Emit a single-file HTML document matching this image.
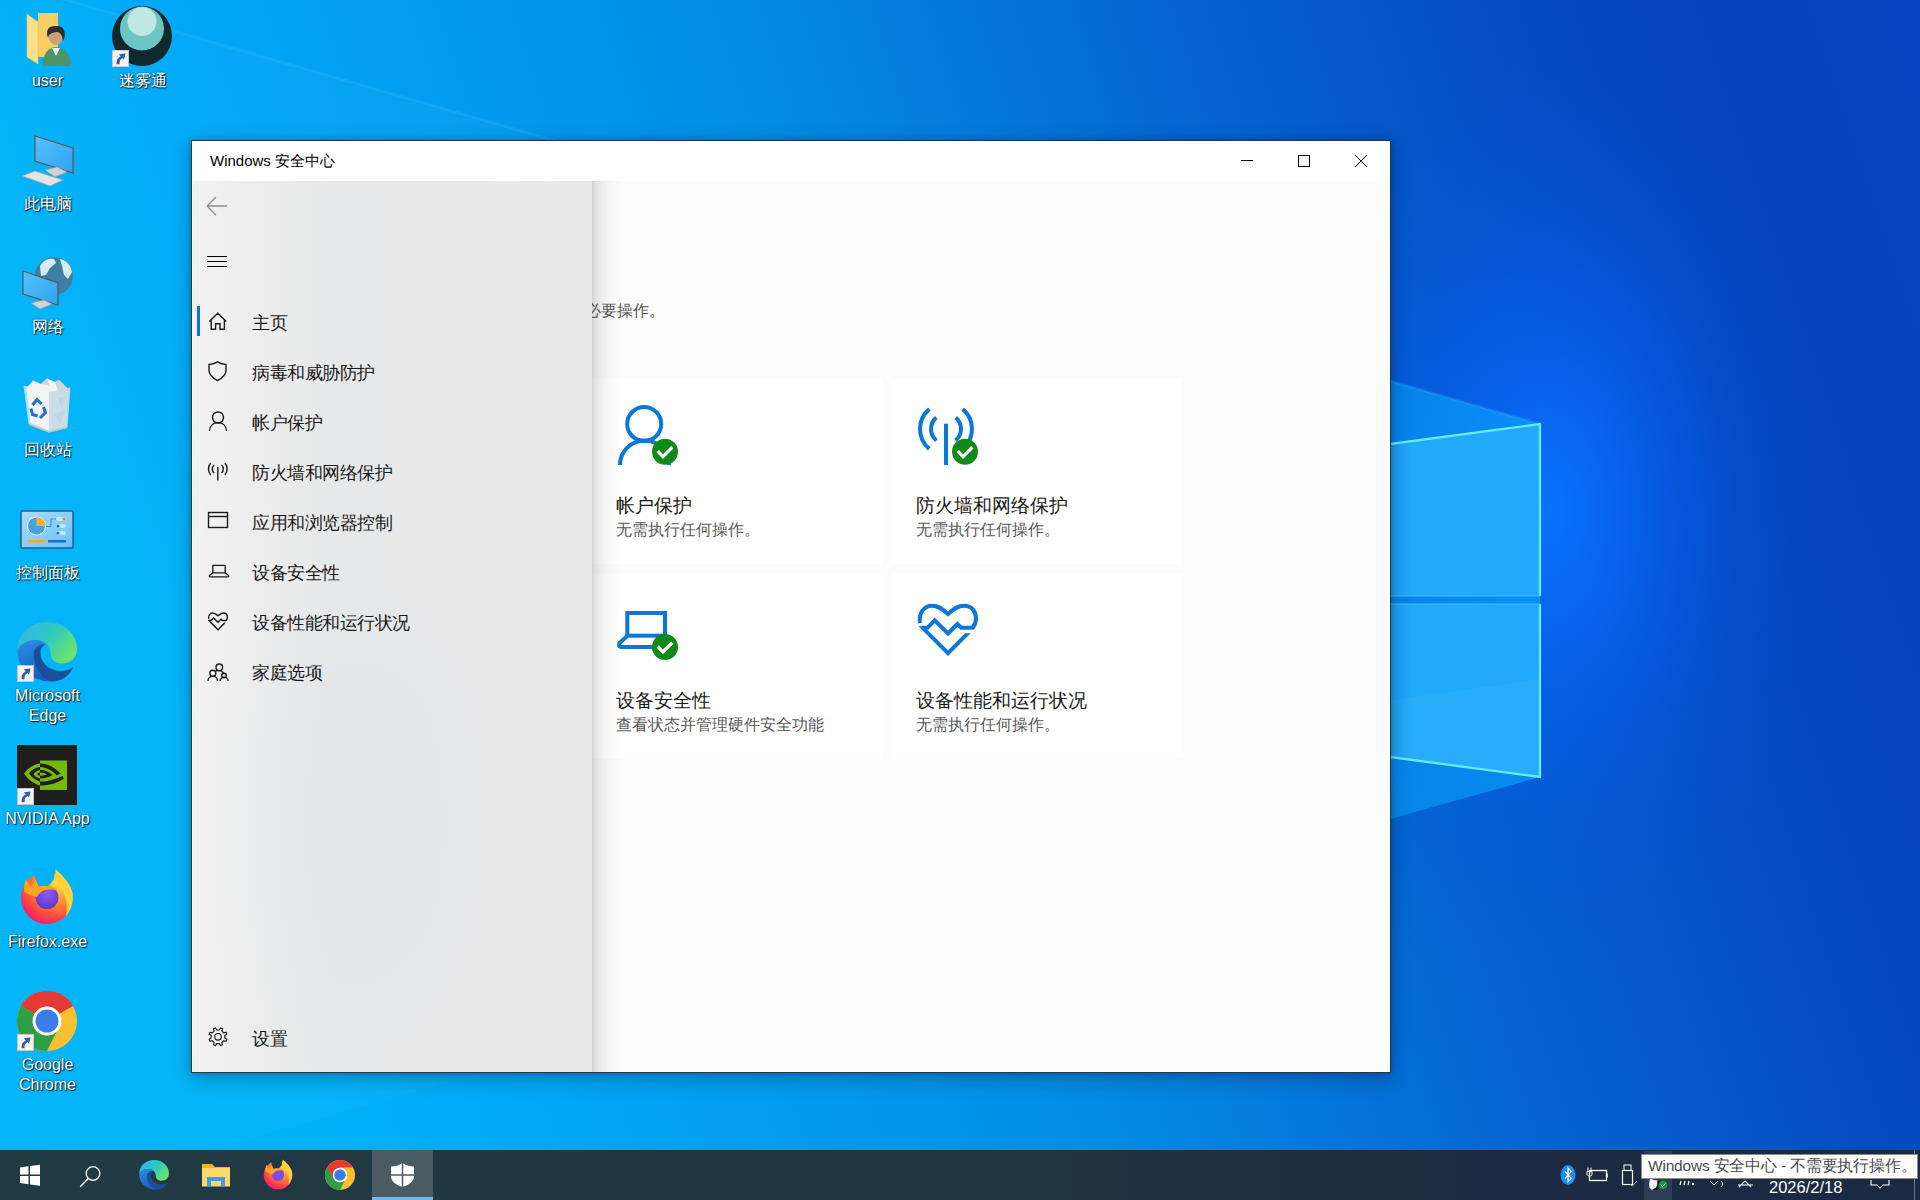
<!DOCTYPE html>
<html><head><meta charset="utf-8">
<style>
@font-face{font-family:"Liberation Sans CJK";src:local("Liberation Sans");unicode-range:U+3000-303F,U+3400-9FFF,U+FF00-FFEF;size-adjust:133.3%;ascent-override:67.9%;descent-override:15.9%;line-gap-override:0%;}
*{box-sizing:border-box;margin:0;padding:0}
html,body{width:1920px;height:1200px;overflow:hidden}
body{position:relative;font-family:"Liberation Sans CJK","Liberation Sans",sans-serif;
background:linear-gradient(72deg,#00b4fa 0%,#00b3f9 15%,#00a9f7 23%,#02a0f2 31%,#0296ec 40%,#028be4 49%,#047ade 57%,#046ad4 64%,#055acc 73%,#054cc4 81%,#0544bd 88%,#0643c0 100%);}
.abs{position:absolute}
#wall{position:absolute;left:0;top:0;width:1920px;height:1150px;overflow:hidden}
/* desktop icons */
.di{position:absolute;width:95px;text-align:center;color:#fff;font-size:16px;line-height:20px;text-shadow:1px 1px 1px rgba(0,0,0,.85),0 0 2px rgba(0,0,0,.55)}
/* window */
#win{position:absolute;left:191px;top:140px;width:1200px;height:933px;border:1px solid #1c3b52;background:#fff;
box-shadow:0 5px 18px rgba(0,0,0,.28),0 0 6px rgba(0,0,0,.18)}
#title{position:absolute;left:18px;top:11px;font-size:15px;color:#000}
#content{position:absolute;left:0;top:40px;width:1198px;height:891px;background:#fcfcfc}
#nav{position:absolute;left:1px;top:40px;width:399px;height:891px;background:radial-gradient(ellipse 160px 260px at 160px 640px,rgba(205,218,232,.22),rgba(205,218,232,0)),linear-gradient(90deg,#f2f2f2 0%,#ededed 15%,#e7e8e9 35%,#e8e8e9 60%,#e9e9e9 85%,#e8e8e8 100%);}
#navshadow{position:absolute;left:400px;top:40px;width:32px;height:891px;background:linear-gradient(90deg,rgba(0,0,0,.17) 0px,rgba(0,0,0,.1) 4px,rgba(0,0,0,.055) 11px,rgba(0,0,0,.025) 18px,rgba(0,0,0,0) 30px)}
.ni{position:absolute;left:59px;font-size:18px;letter-spacing:-0.5px;color:#1a1a1a;white-space:nowrap}
.card{position:absolute;width:290px;height:185px;background:#fff}
.ct{position:absolute;left:24px;top:113px;font-size:19.3px;color:#1a1a1a;white-space:nowrap}
.cs{position:absolute;left:24px;top:141px;font-size:16px;color:#5a5a5a;white-space:nowrap}
#taskbar{position:absolute;left:0;top:1150px;width:1920px;height:50px;background:linear-gradient(90deg,#223a44 0%,#213842 27%,#213441 53%,#1e2d40 74%,#1c2a42 79%,#1b2944 100%)}
#tip{position:absolute;left:1641px;top:1154px;width:277px;height:25px;background:#fff;border:1px solid #8c8c8c;font-size:15.5px;letter-spacing:-0.2px;color:#4c4c4c;white-space:nowrap;padding:1px 0 0 6px;overflow:hidden}
</style></head><body>
<div id="wall"><svg width="1920" height="1150" viewBox="0 0 1920 1150">
<defs>
<radialGradient id="glow" cx="1550" cy="500" r="300" gradientUnits="userSpaceOnUse" gradientTransform="translate(1550 480) scale(0.9 1.5) translate(-1550 -480)">
<stop offset="0" stop-color="#0a72ff" stop-opacity="1"/><stop offset="0.3" stop-color="#0868fa" stop-opacity="0.7"/><stop offset="0.65" stop-color="#065cec" stop-opacity="0.3"/><stop offset="1" stop-color="#0550d0" stop-opacity="0"/></radialGradient>
<linearGradient id="beam" x1="0" y1="0" x2="1540" y2="0" gradientUnits="userSpaceOnUse">
<stop offset="0" stop-color="#40c8ff" stop-opacity="0.05"/><stop offset="0.6" stop-color="#30b0ff" stop-opacity="0.15"/><stop offset="0.88" stop-color="#0aaaff" stop-opacity="0.45"/><stop offset="1" stop-color="#0aaaff" stop-opacity="0.6"/></linearGradient>
<linearGradient id="pane" x1="1390" y1="0" x2="1540" y2="0" gradientUnits="userSpaceOnUse">
<stop offset="0" stop-color="#1e9cf2"/><stop offset="0.15" stop-color="#22aafa"/><stop offset="1" stop-color="#22a8fc"/></linearGradient>
</defs>
<rect x="0" y="0" width="1920" height="1150" fill="url(#glow)"/>
<polygon points="0,-19 1540,424 1540,777 0,1208" fill="url(#beam)"/>
<line x1="0" y1="-19" x2="1540" y2="424" stroke="#60d0ff" stroke-opacity="0.16" stroke-width="3"/>
<polygon points="1300,455 1540,424 1540,596 1300,596" fill="url(#pane)"/>
<polygon points="1300,604 1540,604 1540,777 1300,745" fill="url(#pane)"/>
<polygon points="1300,714 1540,679 1540,777 1300,745" fill="#60d0ff" fill-opacity="0.10"/>
<polyline points="1300,456 1540,424 1540,596" fill="none" stroke="#66ecff" stroke-width="2.3"/>
<polyline points="1540,604 1540,777 1300,745" fill="none" stroke="#66ecff" stroke-width="2.3"/>
<line x1="1300" y1="596" x2="1540" y2="596" stroke="#40c8ff" stroke-width="1.5" stroke-opacity="0.6"/>
<line x1="1300" y1="604" x2="1540" y2="604" stroke="#40c8ff" stroke-width="1.5" stroke-opacity="0.6"/>
</svg></div>

<!-- desktop icons -->
<svg class="abs" style="left:0;top:0" width="200" height="1150" viewBox="0 0 200 1150">
<defs>
<linearGradient id="scr" x1="0" y1="0" x2="1" y2="1"><stop offset="0" stop-color="#5ac0fc"/><stop offset="1" stop-color="#2aa4f4"/></linearGradient>
<linearGradient id="edgeg" x1="0" y1="0" x2="1" y2="0.6"><stop offset="0" stop-color="#32b4f0"/><stop offset="0.55" stop-color="#2ec8c0"/><stop offset="1" stop-color="#6ae46a"/></linearGradient>
<linearGradient id="edgeb" x1="0" y1="0" x2="0.3" y2="1"><stop offset="0" stop-color="#2a8fe6"/><stop offset="1" stop-color="#1a5fc0"/></linearGradient>
<radialGradient id="ffo" cx="0.7" cy="0.2" r="0.9"><stop offset="0" stop-color="#ffe14a"/><stop offset="0.45" stop-color="#ff8a2a"/><stop offset="0.8" stop-color="#ff3a4a"/><stop offset="1" stop-color="#e31587"/></radialGradient>
<radialGradient id="ffp" cx="0.5" cy="0.3" r="0.7"><stop offset="0" stop-color="#9059ff"/><stop offset="1" stop-color="#5b3bbf"/></radialGradient>
<linearGradient id="cpg" x1="0" y1="0" x2="1" y2="1"><stop offset="0" stop-color="#a8defc"/><stop offset="1" stop-color="#6cc0f6"/></linearGradient>
<g id="sc"><rect x="0.5" y="0.5" width="16" height="16" fill="#f4f4f4" stroke="#c8c8c8"/><path d="M4.6 14.2 C4.2 10.2 5.8 7.6 8.6 6.4 L7 4.2 L13.6 3.4 L12 9.8 L10.6 7.9 C8.6 8.9 7.2 11 7.6 14.2 Z" fill="#2f5fa8"/></g>
</defs>
<!-- user folder -->
<path d="M38 13 H58 V57 H38 Z" fill="#f6cf62"/>
<path d="M27 14 L38 22 V64 L27 57 Z" fill="#fde08e"/>
<path d="M27 14 L38 22 V64 L27 57 Z" fill="none" stroke="#e8c060" stroke-width="0.6"/>
<path d="M43 66 C43 54 47 48 56 47 C65 48 71 54 71 66 Z" fill="#4f9466"/>
<path d="M52 48 L56 56 L60 48 Z" fill="#e8f4f8"/>
<ellipse cx="56" cy="36" rx="7.5" ry="9" fill="#c8a07e"/>
<path d="M47 34 C47 26 52 26 57 26 C63 26 65 30 65 36 L63 41 C62 34 60 32 56 32 C51 33 49 34 48 38 Z" fill="#2f2f2f"/>
<!-- mi wu tong -->
<circle cx="142" cy="36" r="30" fill="#10292e"/>
<circle cx="142" cy="28.5" r="22" fill="#6bc5c3"/>
<circle cx="142" cy="21.5" r="14.5" fill="#bfe8e5"/>
<use href="#sc" x="112" y="50"/>
<!-- this pc -->
<path d="M35 136 L73 148 V173 L35 161 Z" fill="url(#scr)" stroke="#5a5a5a" stroke-width="1.3"/>
<path d="M45 170 L57 167 L67 172 L55 177 Z" fill="#cfd3d6" stroke="#9a9a9a" stroke-width="0.6"/>
<path d="M22 176 L35 171 L63 180 L50 186 Z" fill="#e2e4e6" stroke="#a0a0a0" stroke-width="0.8"/>
<!-- network -->
<circle cx="54" cy="276" r="19" fill="#3f7fa6"/>
<path d="M40 266 C44 259 50 258 54 259 L56 263 L50 268 L46 275 L41 276 Z M60 259 C66 260 71 265 72 272 L68 279 L64 275 L62 266 Z" fill="#d6ecf2"/>
<path d="M23 271 L58 283 V305 L23 294 Z" fill="url(#scr)" stroke="#5a5a5a" stroke-width="1.3"/>
<path d="M31 303 L44 300 L52 304 L40 309 Z" fill="#d0d3d6" stroke="#9a9a9a" stroke-width="0.6"/>
<!-- recycle bin -->
<path d="M24 386 L49 392 L70 388 L67 427.5 L49 432 L29 424 Z" fill="#e8f4fa" fill-opacity="0.75" stroke="#c4e0ee" stroke-width="0.8"/>
<path d="M26.5 388 L33 380.5 L41 384 L47 378.5 L55 382 L59 380 L68.5 389.5 L66 425.5 L49 430.5 L30.5 423 Z" fill="#f3f3f3"/>
<path d="M49 392 L68.5 389.5 L66 425.5 L49 430.5 Z" fill="#dde2e6"/>
<path d="M55 382 L59 380 L68.5 389.5 L58 391 Z M41 384 L47 378.5 L50 386 Z M58 398 L66 396 L62 408 Z M54 414 L65 411 L60 424 Z" fill="#d0d5d9"/>
<path d="M49 392 L70 388 L67 427.5 L49 432 Z" fill="#9fd4f0" fill-opacity="0.3"/>
<path d="M29.5 424.5 L49 432 L67 427.5" fill="none" stroke="#c9beb6" stroke-width="1.6"/>
<path d="M32.5 405 L37 399.5 L41.5 404 M31 408.5 L32.5 414.5 L37.5 416 M40 418 L45.5 412.5 L43.5 407" fill="none" stroke="#1f70d2" stroke-width="3"/>
<!-- control panel -->
<rect x="21" y="511" width="52" height="37" rx="1.5" fill="url(#cpg)" stroke="#1f5f98" stroke-width="1.5"/>
<circle cx="36.5" cy="526" r="9" fill="#4aa0e0" stroke="#f0f8ff" stroke-width="1"/>
<path d="M36.5 526 V517 A9 9 0 0 1 45.5 526 Z" fill="#ffb01e"/>
<path d="M46 526.5 H51 V519 H56" fill="none" stroke="#2a78c8" stroke-width="0.8"/><rect x="56" y="517" width="10" height="4" rx="2" fill="#c0e6fc"/><circle cx="64" cy="519" r="1.5" fill="#ff7a10"/>
<rect x="56" y="524" width="10" height="4" rx="2" fill="#c0e6fc"/><circle cx="58" cy="526" r="1.5" fill="#1a6ab8"/>
<rect x="56" y="531" width="10" height="4" rx="2" fill="#c0e6fc"/><circle cx="58" cy="533" r="1.5" fill="#1a6ab8"/>
<rect x="28" y="540" width="17" height="2.5" fill="#ffa520"/><rect x="48" y="540" width="18" height="2.5" fill="#1a6ad0"/>
<!-- edge -->
<path d="M17.5 650 C17.5 633 31 622 47 622 C64 622 77 634 77 649 C77 658 70 663.5 62 663.5 C55 663.5 50.5 659 50.5 653.5 C50.5 646 44 640 36 640 C27 640 19.5 644.5 17.5 650 Z" fill="url(#edgeg)"/>
<path d="M17.5 650 C19.5 644.5 27 640 36 640 C40.5 640 44 641.8 46.3 644.3 C39 643.5 33.5 648 33.5 654 C33.5 666 41 676 52 681.5 C32 682 17 668 17.5 650 Z" fill="url(#edgeb)"/>
<path d="M33.5 654 C33.5 648 39 643.5 46.3 644.3 C42.5 645.5 40.5 649 40.5 653 C40.5 663 50 671 61 671 C66 671 70 669.5 73.5 667 C69 677 60 682 51 681.5 C40 677 33.5 666 33.5 654 Z" fill="#1a4f9c"/>
<use href="#sc" x="17" y="665"/>
<!-- nvidia -->
<rect x="17" y="745" width="60" height="60" fill="#1e1e1e"/>
<rect x="40" y="760.5" width="27" height="29.5" fill="#76b900"/>
<path d="M40 763.5 C33 764.5 27.5 768.5 24 773.5 C27.5 779 33 783.5 40 785.5 V781.5 C35 780 31.5 777 29 773.5 C31.5 770 35 767.5 40 767 Z" fill="#76b900"/>
<path d="M40 770 C37 770.5 35 772 33.5 774 C35 776.5 37 777.8 40 778.5 V775.8 C38.8 775.5 38 775 37.2 774 C38 773.2 38.8 772.8 40 772.6 Z" fill="#76b900"/>
<path d="M40 763.5 C48 763.5 55 767.5 60.5 773.8 L56.8 775.3 C52 770.5 46.5 767.2 40 767 Z" fill="#1e1e1e"/>
<path d="M40 781.5 C47 781.8 54.5 779.8 62.5 776 L63.8 778.8 C56 783.6 48 786 40 785.5 Z" fill="#1e1e1e"/>
<path d="M40 770 C45 770 49.5 772 52.5 775 C49.5 777.2 45 778.5 40 778.5 V775.8 C43 775.8 45.3 775.3 47 774.6 C45.3 773.3 43 772.6 40 772.6 Z" fill="#1e1e1e"/>
<use href="#sc" x="17" y="788"/>
<!-- firefox -->
<circle cx="47" cy="898" r="26" fill="url(#ffo)"/>
<polygon points="35.5,879 38.5,886.5 48,886.5 53.5,880 55.5,868 33,868" fill="#02b1f8"/>
<path d="M55.5 869.5 C63 875 70 884 72.5 893 C73.5 900 72 909 66 916 C68 905 66 895 60 888 C57 884 55 878 55.5 869.5 Z" fill="#ffd23a"/>
<circle cx="47" cy="897.5" r="11.5" fill="url(#ffp)"/>
<path d="M26 879.5 L31 887 L35.5 879.5 L38.5 886.8 C44.5 885 52 885.5 58 890.5 C53 889 47.5 889.3 44 890.5 C41 891.5 38.5 894 37 897 C33 896.5 28.5 894.5 24.5 892 C23.5 887.5 24.5 883.5 26 879.5 Z" fill="#ffa51e"/>
<!-- chrome -->
<circle cx="47" cy="1021" r="30" fill="#fbc02d"/>
<path d="M47 1021 L21 1006 A30 30 0 0 1 73 1006 Z" fill="#e53935"/>
<path d="M47 1021 L21 1006 A30 30 0 0 0 47 1051 L62 1021 Z" fill="#2e9e47"/>
<path d="M47 1006 H73 A30 30 0 0 0 21 1006 Z" fill="#e53935"/>
<circle cx="47" cy="1021" r="14.5" fill="#fff"/>
<circle cx="47" cy="1021" r="11.5" fill="#3b7de8"/>
<use href="#sc" x="17" y="1034"/>
</svg>
<div class="di" style="left:0;top:71px">user</div>
<div class="di" style="left:95px;top:71px">迷雾通</div>
<div class="di" style="left:0;top:194px">此电脑</div>
<div class="di" style="left:0;top:317px">网络</div>
<div class="di" style="left:0;top:440px">回收站</div>
<div class="di" style="left:0;top:563px">控制面板</div>
<div class="di" style="left:0;top:686px">Microsoft<br>Edge</div>
<div class="di" style="left:0;top:809px">NVIDIA App</div>
<div class="di" style="left:0;top:932px">Firefox.exe</div>
<div class="di" style="left:0;top:1055px">Google<br>Chrome</div>

<div id="win">
  <div id="title">Windows 安全中心</div>
<svg class="abs" style="left:1040px;top:5px" width="140" height="30" stroke="#000" fill="none" stroke-width="1">
<line x1="9" y1="14.5" x2="21" y2="14.5"/>
<rect x="66.5" y="9.5" width="11" height="11"/>
<path d="M123 9 L135 21 M135 9 L123 21"/>
</svg>
  <div id="content">
    <div class="abs" style="left:393px;top:120px;font-size:15.5px;color:#555;white-space:nowrap">必要操作。</div>
    <div class="card" style="left:400px;top:198px"><svg class="abs" style="left:0;top:0" width="120" height="100" fill="none" stroke="#0b77d8" stroke-width="4"><circle cx="52.2" cy="45" r="17"/><path d="M28 86 A24.5 24.5 0 0 1 77 86"/><circle cx="73" cy="72.7" r="13" fill="#0f8a17" stroke="none"/><path d="M65.7 72.1 L71.0 77.6 L80.3 68.3" stroke="#fff" stroke-width="3.4" fill="none"/></svg><div class="ct">帐户保护</div><div class="cs">无需执行任何操作。</div></div>
    <div class="card" style="left:700px;top:198px"><svg class="abs" style="left:0;top:0" width="120" height="100" fill="none" stroke="#0b77d8" stroke-width="4"><path d="M54 44.7 V86"/><path d="M44.4 38.5 A15 15 0 0 0 44.4 61.5 M63.6 38.5 A15 15 0 0 1 63.6 61.5"/><path d="M37.3 30.1 A26 26 0 0 0 37.3 69.9 M70.7 30.1 A26 26 0 0 1 70.7 69.9"/><circle cx="73" cy="72.7" r="13" fill="#0f8a17" stroke="none"/><path d="M65.7 72.1 L71.0 77.6 L80.3 68.3" stroke="#fff" stroke-width="3.4" fill="none"/></svg><div class="ct">防火墙和网络保护</div><div class="cs">无需执行任何操作。</div></div>
    <div class="card" style="left:400px;top:393px"><svg class="abs" style="left:0;top:0" width="120" height="100" fill="none" stroke="#0b77d8" stroke-width="4"><rect x="35.3" y="39" width="37.7" height="22.7"/><path d="M35.3 62 L28 68.5 C26 70.5 27 72.9 29.5 72.9 H80" stroke-linejoin="round"/><circle cx="73" cy="73" r="13" fill="#0f8a17" stroke="none"/><path d="M65.7 72.4 L71.0 77.9 L80.3 68.6" stroke="#fff" stroke-width="3.4" fill="none"/></svg><div class="ct">设备安全性</div><div class="cs">查看状态并管理硬件安全功能</div></div>
    <div class="card" style="left:700px;top:393px"><svg class="abs" style="left:0;top:0" width="120" height="100" fill="none" stroke="#0b77d8" stroke-width="4"><path d="M28 49 C26.5 39 32 31.7 40 31.7 C46 31.7 50 34.5 56 40 C62 34.5 66 31.7 72 31.7 C80 31.7 84 38 84 44 C84 48 82.8 51 80.8 53.8 H69.3 L65.3 50 L56 59.5 L42.7 46.4 L35.4 53.8 H30"/><polygon points="26.4,52.2 56,82 78.7,59.3 73,59.3 56,76.3 32.1,52.4" fill="#0b77d8" stroke="none"/></svg><div class="ct">设备性能和运行状况</div><div class="cs">无需执行任何操作。</div></div>
  </div>
  <div id="navshadow"></div>
  <div id="nav">
    <div class="abs" style="left:4px;top:125px;width:3px;height:30px;background:#0078d7"></div>
<svg class="abs" style="left:0;top:0" width="60" height="891" fill="none" stroke="#1a1a1a" stroke-width="1.4">
<path d="M14 25 H34 M14 25 L23 16 M14 25 L23 34" stroke="#8a8a8a" stroke-width="1.3"/>
<path d="M14 75.5 H34 M14 80.5 H34 M14 85.5 H34" stroke="#000" stroke-width="1.2"/>
<!-- home -->
<path d="M16.3 140.5 L24.8 132.3 L33.3 140.5 M18.2 139 V148.3 H22.6 V142.8 H27 V148.3 H31.4 V139" stroke-linejoin="miter"/>
<!-- shield -->
<path d="M24.5 180.8 C22 182.3 19.5 183.2 16 183.4 V189.5 C16 193.5 19.5 196.8 24.5 199.6 C29.5 196.8 33 193.5 33 189.5 V183.4 C29.5 183.2 27 182.3 24.5 180.8 Z"/>
<!-- person -->
<circle cx="25" cy="236.5" r="5.5"/>
<path d="M16.5 250 C16.5 245 20 241.5 25 241.5 C30 241.5 33.5 245 33.5 250"/>
<!-- antenna -->
<path d="M24.8 286 V299.5"/>
<path d="M21.12 283.91 A5.5 5.5 0 0 0 21.12 292.09 M28.48 283.91 A5.5 5.5 0 0 1 28.48 292.09"/>
<path d="M17.68 282.02 A9.3 9.3 0 0 0 17.68 293.98 M31.92 282.02 A9.3 9.3 0 0 1 31.92 293.98"/>
<!-- app browser -->
<rect x="15.5" y="331.5" width="19" height="15"/>
<path d="M15.5 335.5 H34.5"/>
<!-- device -->
<path d="M19.8 391.8 V384.3 H32.2 V391.8 M19.8 391.8 L16.6 394.6 C16 395.3 16.3 395.9 17.2 395.9 H34.8 C35.7 395.9 36 395.3 35.4 394.6 L32.2 391.8 Z" stroke-width="1.35" stroke-linejoin="round"/>
<!-- heart -->
<g transform="translate(15 431.4) scale(0.3333) translate(-26 -29.7)" stroke-width="4.2"><path d="M28 49 C26.5 39 32 31.7 40 31.7 C46 31.7 50 34.5 56 40 C62 34.5 66 31.7 72 31.7 C80 31.7 84 38 84 44 C84 48 82.8 51 80.8 53.8 H69.3 L65.3 50 L56 59.5 L42.7 46.4 L35.4 53.8 H26.5"/><path d="M30.5 56 L56 81.5 L76.5 61"/></g>
<!-- family -->
<circle cx="26.3" cy="486.3" r="3.3"/><circle cx="19.8" cy="492.2" r="3"/><circle cx="31" cy="494.5" r="2.3"/>
<path d="M15 500 A4.8 4.8 0 0 1 24.6 500 M27.2 500 A3.9 3.9 0 0 1 35 500 M22.6 489.6 C23.5 489.8 24.8 489.6 26.3 489.6 C28.2 489.6 29.6 490.5 30.6 492"/>
<!-- gear -->
<g transform="translate(25 855.8)" stroke-width="1.15"><circle r="3.3"/><path d="M6.79 1.24 L8.85 2.50 L8.03 4.50 L5.68 3.92 L3.92 5.68 L4.50 8.03 L2.50 8.85 L1.24 6.79 L-1.24 6.79 L-2.50 8.85 L-4.50 8.03 L-3.92 5.68 L-5.68 3.92 L-8.03 4.50 L-8.85 2.50 L-6.79 1.24 L-6.79 -1.24 L-8.85 -2.50 L-8.03 -4.50 L-5.68 -3.92 L-3.92 -5.68 L-4.50 -8.03 L-2.50 -8.85 L-1.24 -6.79 L1.24 -6.79 L2.50 -8.85 L4.50 -8.03 L3.92 -5.68 L5.68 -3.92 L8.03 -4.50 L8.85 -2.50 L6.79 -1.24 Z" stroke-linejoin="round"/></g>
</svg>
    <div class="ni" style="top:130px">主页</div>
    <div class="ni" style="top:180px">病毒和威胁防护</div>
    <div class="ni" style="top:230px">帐户保护</div>
    <div class="ni" style="top:280px">防火墙和网络保护</div>
    <div class="ni" style="top:330px">应用和浏览器控制</div>
    <div class="ni" style="top:380px">设备安全性</div>
    <div class="ni" style="top:430px">设备性能和运行状况</div>
    <div class="ni" style="top:480px">家庭选项</div>
    <div class="ni" style="top:846px">设置</div>
  </div>
</div>

<div id="taskbar">
<svg class="abs" style="left:0;top:0" width="1920" height="50">
<defs>
<linearGradient id="tedg" x1="0" y1="0" x2="1" y2="0.6"><stop offset="0" stop-color="#32b4f0"/><stop offset="0.55" stop-color="#2ec8c0"/><stop offset="1" stop-color="#6ae46a"/></linearGradient>
<linearGradient id="tedb" x1="0" y1="0" x2="0.3" y2="1"><stop offset="0" stop-color="#2a8fe6"/><stop offset="1" stop-color="#1a5fc0"/></linearGradient>
<radialGradient id="tffo" cx="0.7" cy="0.2" r="0.9"><stop offset="0" stop-color="#ffe14a"/><stop offset="0.45" stop-color="#ff8a2a"/><stop offset="0.8" stop-color="#ff3a4a"/><stop offset="1" stop-color="#e31587"/></radialGradient>
</defs>
<!-- start -->
<path d="M20 17.5 L28.5 16.3 V24.5 H20 Z M30 16.1 L40 14.7 V24.5 H30 Z M20 26 H28.5 V34.2 L20 33 Z M30 26 H40 V35.8 L30 34.4 Z" fill="#fff"/>
<!-- search -->
<circle cx="93" cy="23.5" r="6.8" fill="none" stroke="#fff" stroke-width="1.3"/>
<path d="M88.3 28.5 L80.2 36.7" stroke="#fff" stroke-width="1.4"/>
<!-- edge -->
<g transform="translate(154 25) scale(0.5) translate(-47 -652)">
<path d="M17.5 650 C17.5 633 31 622 47 622 C64 622 77 634 77 649 C77 658 70 663.5 62 663.5 C55 663.5 50.5 659 50.5 653.5 C50.5 646 44 640 36 640 C27 640 19.5 644.5 17.5 650 Z" fill="url(#tedg)"/>
<path d="M17.5 650 C19.5 644.5 27 640 36 640 C40.5 640 44 641.8 46.3 644.3 C39 643.5 33.5 648 33.5 654 C33.5 666 41 676 52 681.5 C32 682 17 668 17.5 650 Z" fill="url(#tedb)"/>
<path d="M33.5 654 C33.5 648 39 643.5 46.3 644.3 C42.5 645.5 40.5 649 40.5 653 C40.5 663 50 671 61 671 C66 671 70 669.5 73.5 667 C69 677 60 682 51 681.5 C40 677 33.5 666 33.5 654 Z" fill="#1a4f9c"/>
</g>
<!-- explorer -->
<path d="M202 14 H212 L215 17 H230 V36 H202 Z" fill="#f0b429"/>
<rect x="202" y="18" width="28" height="18.5" fill="#fcd96a"/>
<path d="M207 37 V27 H225 V37 H221 V31 H211 V37 Z" fill="#3c9ae8"/>
<!-- firefox -->
<g transform="translate(278 24.5) scale(0.55) translate(-47 -897)">
<circle cx="47" cy="898" r="26" fill="url(#tffo)"/>
<polygon points="35.5,879 38.5,886.5 48,886.5 53.5,880 55.5,866 33,866" fill="#213842"/>
<path d="M55.5 869.5 C63 875 70 884 72.5 893 C73.5 900 72 909 66 916 C68 905 66 895 60 888 C57 884 55 878 55.5 869.5 Z" fill="#ffd23a"/>
<circle cx="47" cy="897.5" r="11.5" fill="#7d4ce8"/>
<path d="M26 879.5 L31 887 L35.5 879.5 L38.5 886.8 C44.5 885 52 885.5 58 890.5 C53 889 47.5 889.3 44 890.5 C41 891.5 38.5 894 37 897 C33 896.5 28.5 894.5 24.5 892 C23.5 887.5 24.5 883.5 26 879.5 Z" fill="#ffa51e"/>
</g>
<!-- chrome -->
<g transform="translate(340 25) scale(0.5) translate(-47 -1021)">
<circle cx="47" cy="1021" r="30" fill="#fbc02d"/>
<path d="M47 1021 L21 1006 A30 30 0 0 0 47 1051 L62 1021 Z" fill="#2e9e47"/>
<path d="M47 1006 H73 A30 30 0 0 0 21 1006 L34 1028 Z" fill="#e53935"/>
<circle cx="47" cy="1021" r="14.5" fill="#fff"/>
<circle cx="47" cy="1021" r="11.5" fill="#3b7de8"/>
</g>
</svg>
<div class="abs" style="left:372px;top:0;width:61px;height:50px;background:#4b5b63"></div>
<div class="abs" style="left:372px;top:47px;width:61px;height:3px;background:#76b9ed"></div>
<svg class="abs" style="left:372px;top:0" width="61" height="50">
<path d="M30.5 13 C27 15.5 23 16.5 19 16.5 V26 C19 31 23 34.5 30.5 37 C38 34.5 42 31 42 26 V16.5 C38 16.5 34 15.5 30.5 13 Z" fill="#fff"/>
<path d="M30.5 13 V37 M19 25 H42" stroke="#4b5b63" stroke-width="1.5"/>
</svg>
<!-- tray -->
<svg class="abs" style="left:1540px;top:0" width="380" height="50" fill="none" stroke="#fff" stroke-width="1.2">
<rect x="104" y="1" width="28" height="49" fill="#2e3e58" stroke="none"/>
<ellipse cx="28" cy="25" rx="7.5" ry="10" fill="#1a8cf8" stroke="none"/>
<path d="M24.8 21.3 L31.3 28.3 L28 31.8 V18 L31.3 21.6 L24.8 28.6" stroke-width="1.2"/>
<rect x="49.5" y="20.5" width="17" height="10" stroke-width="1.3"/><path d="M67 23.5 V27.5" stroke-width="1.5"/>
<path d="M48 17.5 V21.5 M51 17.5 V21.5 M47 21.5 H52 V24 C52 25.5 51 26 49.5 26 C48 26 47 25.5 47 24 Z M49.5 26 V31" stroke-width="1"/>
<rect x="82.5" y="20.5" width="10" height="14" stroke-width="1.2"/><rect x="84" y="15" width="7" height="5.5" stroke-width="1"/>
<path d="M90 34 L92.5 36 L97 31" stroke="#bbb" stroke-width="0.9"/>
<path d="M110 28 C112 29.5 114.5 30.3 117.5 30.3 V34 C117.5 36.5 115.5 38.5 112 40 C110 38.5 109 37 109 35 Z" fill="#f0f0f0" stroke="none"/><path d="M112 40 C115.5 38.5 117.5 36.5 117.5 34 V30.3 L120 31 L117 40 Z" fill="#111" stroke="none"/><circle cx="123" cy="35" r="4.3" fill="#1a9a3a" stroke="none"/><path d="M120.8 35 L122.5 36.7 L125.3 33.5" stroke-width="0.9"/>
<path d="M140 35 L141 31 M144 35 L145 31 M148 35 L149 31" stroke-width="1.2"/><circle cx="153" cy="34" r="1.2" fill="#fff" stroke="none"/>
<path d="M170 31 L174 35 L178 31 M181 31 C183 33 183 35 181 37" stroke-width="1"/>
<path d="M198 35 H213 M205 31 L199 37 M205 31 L211 37" stroke-width="1.2"/>
<path d="M331 30 V35 H337 L340 38 L343 35 H349 V30" stroke-width="1.1"/>
<path d="M374.5 0 V50" stroke="#6a7890" stroke-width="1"/>
</svg>
<div class="abs" style="left:1769px;top:28px;font-size:16.5px;color:#fff;white-space:nowrap">2026/2/18</div>
</div>
<div id="tip">Windows 安全中心 - 不需要执行操作。</div>
</body></html>
